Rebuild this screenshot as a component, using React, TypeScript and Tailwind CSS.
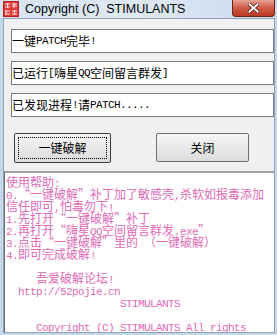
const ascii = "font-['Liberation_Mono',monospace] text-[11px] tracking-[-0.6px] leading-[12px]"

// splits a line into CJK (12px) and ASCII (6px advance) runs, like SimSun
function Txt({ s }: { s: string }) {
  const runs = s.match(/[\x00-\x7f]+|[^\x00-\x7f]+/g) ?? []
  return (
    <>
      {runs.map((r, i) =>
        /^[\x00-\x7f]/.test(r) ? (
          <span key={i} className={ascii}>
            {r}
          </span>
        ) : (
          <span key={i}>{r}</span>
        ),
      )}
    </>
  )
}

function Field({ text }: { text: string }) {
  return (
    <div className="h-[24px] border border-[#7a7a7a] bg-white flex items-center pl-0 whitespace-pre">
      <Txt s={text} />
    </div>
  )
}

const help = [
  '使用帮助:',
  '0.“一键破解”补丁加了敏感壳,杀软如报毒添加',
  '信任即可,怕毒勿下!',
  '1.先打开“一键破解”补丁',
  '2.再打开“嗨星QQ空间留言群发.exe”',
  '3.点击“一键破解”里的 （一键破解）',
  '4.即可完成破解!',
  '',
  '     吾爱破解论坛!',
  '  http://52pojie.cn',
  '                   STIMULANTS',
  '',
  '     Copyright (C) STIMULANTS All rights',
]

function SealIcon() {
  return (
    <svg width="16" height="16" viewBox="0 0 16 16">
      <rect x="0.5" y="0.5" width="15" height="15" fill="#e23b3b" stroke="#b81d1d" />
      <path d="M2 3h5M4.5 2v5M2 6h5M9 3h5M11 2v5M9 5h5M2 10h5M3 9v5M2 13h5M9 10h5M11.5 9v5M9 13h5" stroke="#fde3e3" strokeWidth="1" />
    </svg>
  )
}

export default function App() {
  return (
    <div className="w-[277px] h-[335px] overflow-hidden flex flex-col bg-[#c6d7ea] font-['Noto_Sans_CJK_SC',sans-serif] text-[12px] leading-[12px] text-black">
      <div className="h-[20px] flex items-start bg-gradient-to-r from-[#d6e3f1] via-[#dfe9f4] to-[#c9d9ec]">
        <div className="ml-[3px] mt-[1px]">
          <SealIcon />
        </div>
        <div className="ml-[6px] mt-[2px] font-['Liberation_Sans',sans-serif] text-[12.5px] leading-[15px] whitespace-pre">Copyright (C)  STIMULANTS</div>
        <div className="ml-auto mr-[2px] w-[43px] h-[17px] rounded-b-[4px] border border-t-0 border-[#6b2219] bg-gradient-to-b from-[#e6a395] via-[#cf5a47] to-[#b93a26] flex items-center justify-center">
          <svg width="11" height="10" viewBox="0 0 11 10">
            <path d="M1.5 1.5l8 7M9.5 1.5l-8 7" stroke="#4a1410" strokeWidth="3.4" strokeLinecap="square" />
            <path d="M1.5 1.5l8 7M9.5 1.5l-8 7" stroke="#ffffff" strokeWidth="2" strokeLinecap="square" />
          </svg>
        </div>
      </div>
      <div className="flex-1 ml-[3px] mr-[2px] mb-[2px] border border-[#8ea2b8] bg-[#f0f0f0] flex flex-col">
        <div className="flex flex-col gap-[8px] ml-[7px] mr-[0px] mt-[10px]">
          <Field text="一键PATCH完毕!" />
          <Field text="已运行[嗨星QQ空间留言群发]" />
          <Field text="已发现进程!请PATCH....." />
        </div>
        <div className="flex items-start mt-[16px] ml-[10px] gap-[45px]">
          <div className="w-[97px] h-[30px] border border-[#3c3c3c] rounded-[2px] bg-gradient-to-b from-[#f6f6f6] to-[#dcdcdc] p-[3px]">
            <div className="w-full h-full border border-dotted border-black flex items-center justify-center">一键破解</div>
          </div>
          <div className="w-[93px] h-[29px] border border-[#707070] rounded-[2px] bg-gradient-to-b from-[#f6f6f6] to-[#dcdcdc] flex items-center justify-center">关闭</div>
        </div>
        <div className="mt-[8px] flex-1 border-t-2 border-l border-t-[#a0a0a0] border-l-[#6d6d6d] bg-white pl-[1px] pt-[3px] text-[#e06ab6] overflow-hidden">
          {help.map((l, i) => (
            <div key={i} className="h-[12px] whitespace-pre">
              <Txt s={l} />
            </div>
          ))}
        </div>
      </div>
    </div>
  )
}
